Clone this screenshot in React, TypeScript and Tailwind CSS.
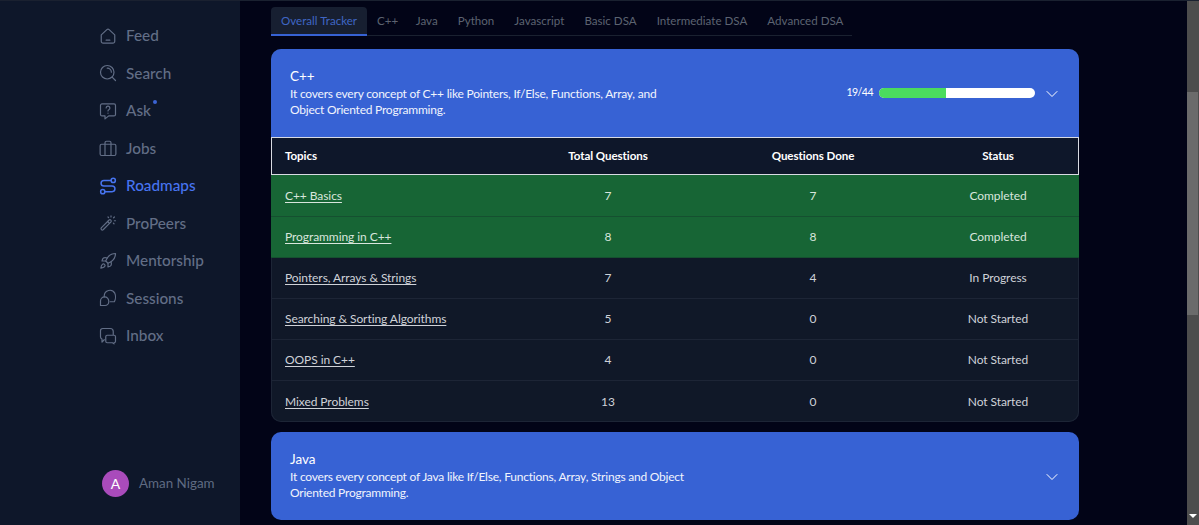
import React from 'react';
import { ChevronDown, Rocket } from 'lucide-react';

const font = "font-['Lato','Liberation_Sans',sans-serif]";

const iconProps = {
    viewBox: '0 0 24 24',
    className: 'h-[18px] w-[18px]',
    fill: 'none',
    stroke: 'currentColor',
    strokeWidth: 1.6,
    strokeLinecap: 'round' as const,
    strokeLinejoin: 'round' as const,
};

const HomeIcon = () => (
    <svg {...iconProps}>
        <path d="M3 10.500 10.500 3.500a2.200 2.200 0 0 1 3 0L21 10.500V19a2.500 2.500 0 0 1-2.500 2.500h-13A2.500 2.500 0 0 1 3 19z" />
        <path d="M9.500 17.500h5" />
    </svg>
);

const SearchIcon = () => (
    <svg {...iconProps}>
        <circle cx="11" cy="11" r="9" />
        <path d="M11 5.500a5.500 5.500 0 0 1 5.500 5.500M17.500 17.500l4.500 4.500" />
    </svg>
);

const AskIcon = () => (
    <svg {...iconProps}>
        <path d="M4 2.500h16a2 2 0 0 1 2 2v12a2 2 0 0 1-2 2h-7l-5 4v-4H4a2 2 0 0 1-2-2v-12a2 2 0 0 1 2-2z" />
        <path d="M9.500 8a2.500 2.500 0 1 1 3.600 2.300c-.8.400-1.100.900-1.100 1.700M12 14.800v.2" />
    </svg>
);

const JobsIcon = () => (
    <svg {...iconProps}>
        <rect x="1.500" y="7" width="21" height="15" rx="2" />
        <path d="M8 22V5a2 2 0 0 1 2-2h4a2 2 0 0 1 2 2v17" />
    </svg>
);

const RoadmapIcon = () => (
    <svg {...iconProps} strokeWidth={2}>
        <circle cx="19" cy="4.500" r="2.800" />
        <circle cx="5" cy="19.500" r="2.800" />
        <path d="M16 4.500H6.500a3.700 3.700 0 0 0 0 7.500h11a3.700 3.700 0 0 1 0 7.500H8" />
    </svg>
);

const WandIcon = () => (
    <svg {...iconProps}>
        <path d="M3 18.500 13.500 8a1.800 1.800 0 0 1 2.500 2.500L5.500 21a1.800 1.800 0 0 1-2.500-2.500z" />
        <path d="M11.500 10 14 12.500" />
        <path d="M16 2.500v1.500M20.500 4 19.500 5M22 9h-1.500M12 4l.8.800M20 13l-.8-.8" />
    </svg>
);

const SessionsIcon = () => (
    <svg {...iconProps}>
        <path d="M7 10.500V9a7.500 7.500 0 0 1 14-3.500c1.500 3.500 1 9-.5 11.500H15" />
        <path d="M2 22v-6a5.500 5.500 0 0 1 11 0v1a5 5 0 0 1-5 5z" />
    </svg>
);

const InboxIcon = () => (
    <svg {...iconProps}>
        <path d="M7 17 4 20v-4a3 3 0 0 1-2-3V5a3 3 0 0 1 3-3h10a4 4 0 0 1 4 4v4" />
        <path d="M11 11h9a2 2 0 0 1 2 2v6a2 2 0 0 1-2 2v1.500l-2-1.500h-7a2 2 0 0 1-2-2v-6a2 2 0 0 1 2-2z" />
    </svg>
);

const navItems = [
    { label: 'Feed', icon: <HomeIcon /> },
    { label: 'Search', icon: <SearchIcon /> },
    { label: 'Ask', icon: <AskIcon />, dot: true },
    { label: 'Jobs', icon: <JobsIcon /> },
    { label: 'Roadmaps', icon: <RoadmapIcon />, active: true },
    { label: 'ProPeers', icon: <WandIcon /> },
    { label: 'Mentorship', icon: <Rocket className="h-[18px] w-[18px]" strokeWidth={1.6} /> },
    { label: 'Sessions', icon: <SessionsIcon /> },
    { label: 'Inbox', icon: <InboxIcon /> },
];

const tabs = ['C++', 'Java', 'Python', 'Javascript', 'Basic DSA', 'Intermediate DSA', 'Advanced DSA'];

const rows = [
    { topic: 'C++ Basics', total: 7, done: 7, status: 'Completed' },
    { topic: 'Programming in C++', total: 8, done: 8, status: 'Completed' },
    { topic: 'Pointers, Arrays & Strings', total: 7, done: 4, status: 'In Progress' },
    { topic: 'Searching & Sorting Algorithms', total: 5, done: 0, status: 'Not Started' },
    { topic: 'OOPS in C++', total: 4, done: 0, status: 'Not Started' },
    { topic: 'Mixed Problems', total: 13, done: 0, status: 'Not Started' },
];

const Sidebar = () => (
    <aside className="flex h-full w-[240px] shrink-0 flex-col bg-[#0e172a] pl-[99px] pt-[16px] pb-[28px]">
        <nav className="flex flex-col">
            {navItems.map(item => (
                <div key={item.label} className={`flex h-[37.5px] items-center gap-[9px] ${item.active ? 'text-[#4774f0]' : 'text-[#626e86]'}`}>
                    <span className="flex w-[18px] justify-center">{item.icon}</span>
                    <span className="relative text-[15.3px] font-medium leading-none">
                        {item.label}
                        {item.dot && <span className="absolute -right-[6px] -top-[3px] h-[4px] w-[4px] rounded-full bg-[#3b64d4]" />}
                    </span>
                </div>
            ))}
        </nav>
        <div className="mt-auto flex items-center gap-[10px] pl-[3px]">
            <div className="flex h-[27px] w-[27px] items-center justify-center rounded-full bg-[#a94bbb] text-[14px] text-white">A</div>
            <span className="text-[13.4px] text-[#5f6b82]">Aman Nigam</span>
        </div>
    </aside>
);

const CourseHeader: React.FC<{ title: string; lines: string[]; progress?: boolean; className: string }> = ({ title, lines, progress, className }) => (
    <div className={`flex items-center bg-[#3762d4] pl-[19px] pr-[17px] text-white ${className}`}>
        <div className="flex-1 pb-[2px]">
            <div className="text-[13.5px] leading-[20px]">{title}</div>
            {lines.map(line => (
                <div key={line} className="text-[12px] leading-[16.5px] tracking-[-0.22px] text-[#f1f4fd]">{line}</div>
            ))}
        </div>
        {progress && (
            <div className="mr-[7px] flex items-center gap-[6px]">
                <span className="text-[10.5px] tracking-[-0.5px]">19/44</span>
                <div className="flex h-[10px] w-[156px] overflow-hidden rounded-full bg-white">
                    <div className="h-full w-[67px] bg-[#4bdc5e]" />
                </div>
            </div>
        )}
        <ChevronDown className="mt-[1px] h-[20px] w-[20px]" strokeWidth={1.2} />
    </div>
);

const Main = () => (
    <main className="flex-1 bg-[#020417] pl-[31px] pr-[108px]">
        <div className="mt-[6px] flex h-[29px] w-[581px] border-b border-[#1a2130] text-[11.6px] whitespace-nowrap">
            <div className="flex h-[29px] items-center rounded-t-[4px] border-b-2 border-[#3762d4] bg-[#171f31] px-[10px] text-[#3f66c4]">Overall Tracker</div>
            {tabs.map(tab => (
                <div key={tab} className={`flex items-center text-[#5c6371] ${tab === 'C++' ? 'pl-[10px] pr-[7.5px]' : 'px-[10px]'}`}>{tab}</div>
            ))}
        </div>
        <section className="mt-[13px] overflow-hidden rounded-[10px] bg-[#101828] ring-1 ring-inset ring-[#1d2536]">
            <CourseHeader className="h-[88px]" title="C++" progress lines={['It covers every concept of C++ like Pointers, If/Else, Functions, Array, and', 'Object Oriented Programming.']} />
            <table className="w-full table-fixed border-collapse text-[12px] tracking-[-0.07px] text-[#cfd2d8]">
                <thead>
                    <tr className="h-[38px] bg-[#0e172a] text-[11.6px] font-bold text-white outline outline-1 -outline-offset-1 outline-[#d8dbe3]">
                        <th className="w-[237px] pb-[1px] pl-[14px] text-left font-bold">Topics</th>
                        <th className="w-[200px] pb-[1px] font-bold">Total Questions</th>
                        <th className="w-[210px] pb-[1px] font-bold">Questions Done</th>
                        <th className="pb-[1px] pr-[1px] font-bold">Status</th>
                    </tr>
                </thead>
                <tbody>
                    {rows.map((row, i) => (
                        <tr key={row.topic} className={`${i < 5 ? 'h-[41px] border-b' : 'h-[42px]'} ${row.status === 'Completed' ? 'border-[#155030] bg-[#176535] text-[#d9e6dd]' : 'border-[#1d2536]'}`}>
                            <td className="pl-[14px] pt-[1px]"><span className="underline underline-offset-2">{row.topic}</span></td>
                            <td className="pt-[1px] text-center">{row.total}</td>
                            <td className="pt-[1px] text-center">{row.done}</td>
                            <td className="pt-[1px] pr-[1px] text-center">{row.status}</td>
                        </tr>
                    ))}
                </tbody>
            </table>
        </section>
        <div className="mt-[10px]">
            <CourseHeader className="h-[88px] rounded-[10px]" title="Java" lines={['It covers every concept of Java like If/Else, Functions, Array, Strings and Object', 'Oriented Programming.']} />
        </div>
    </main>
);

const Scrollbar = () => (
    <div className="flex h-full w-[12px] shrink-0 flex-col bg-[#4d4d4d]">
        <div className="h-[91px]" />
        <div className="mr-[1px] h-[223px] bg-[#6b6b6b]" />
        <div className="mt-auto mb-[7px] flex justify-center">
            <div className="h-0 w-0 border-x-[4px] border-t-[4px] border-x-transparent border-t-white" />
        </div>
    </div>
);

export default function App() {
    return (
        <div className={`flex h-[525px] w-[1199px] overflow-hidden border-t border-[#1a2130] ${font}`}>
            <Sidebar />
            <Main />
            <Scrollbar />
        </div>
    );
}
